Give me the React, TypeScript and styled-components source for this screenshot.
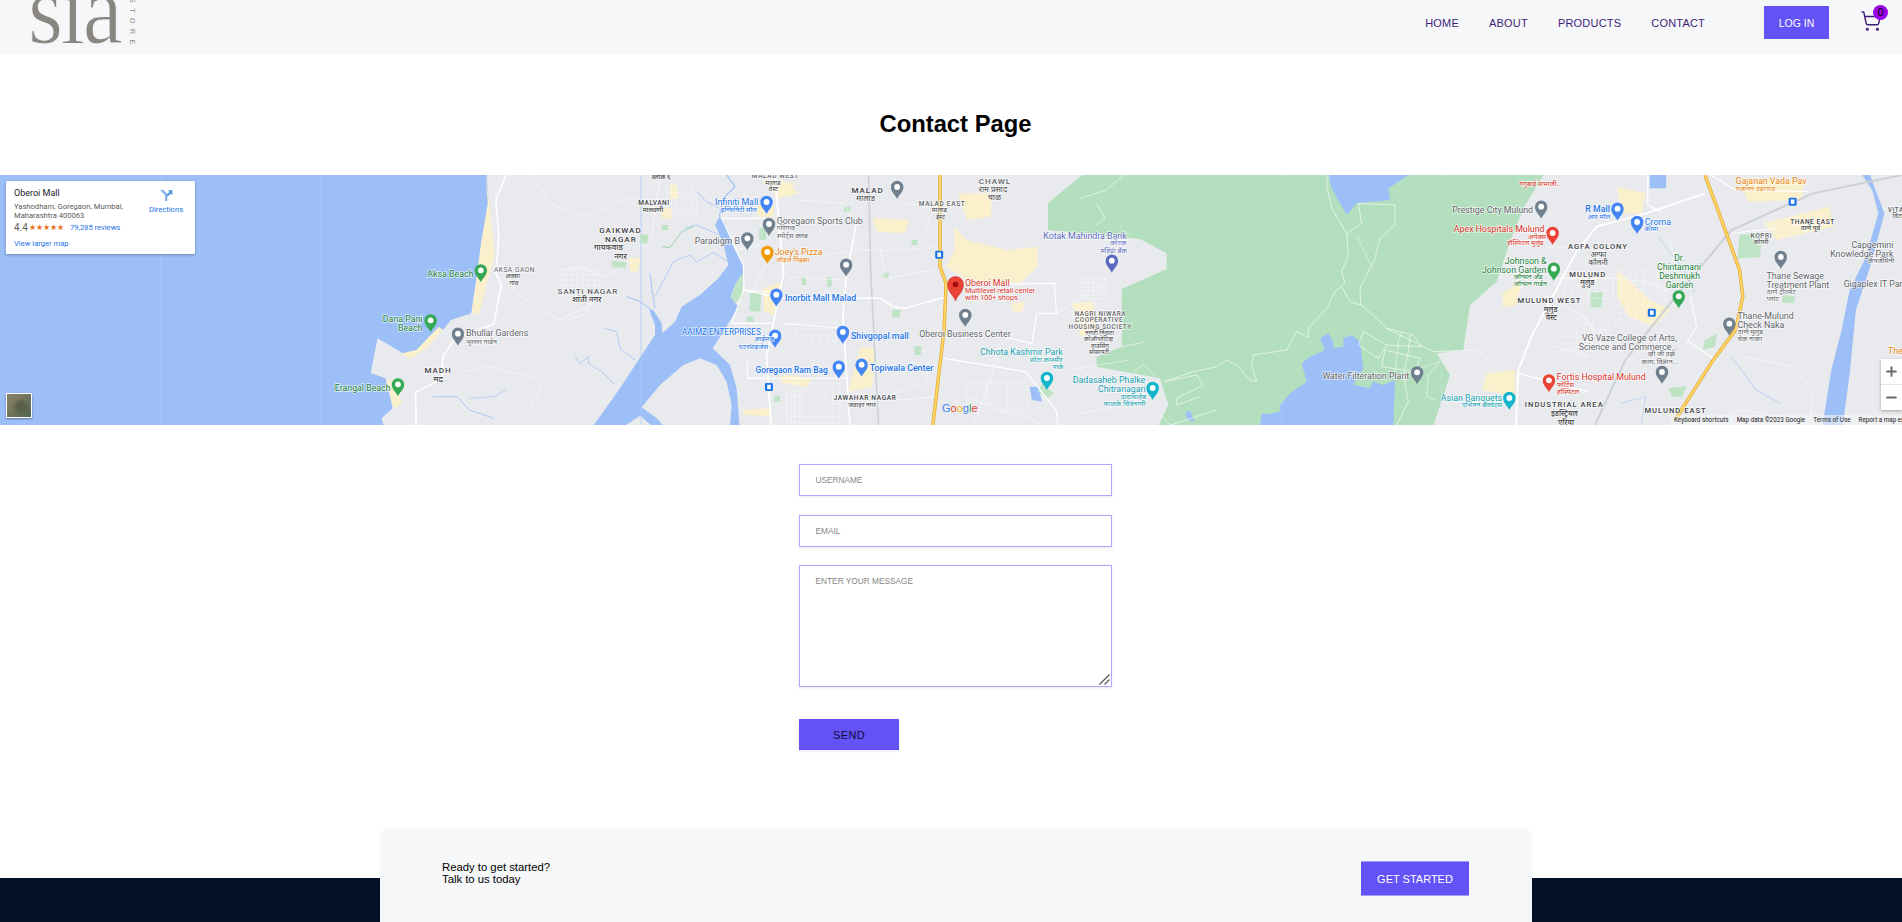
import React from "react";
import styled, { createGlobalStyle } from "styled-components";
import { ShoppingCart, Plus, Minus } from "lucide-react";

const Global = createGlobalStyle`
  html, body { margin: 0; padding: 0; background: #fff; overflow: hidden; }
  body { font-family: "Liberation Sans", Arial, sans-serif; }
  * { box-sizing: border-box; }
`;

const Page = styled.div`
  height: 922px;
  overflow: hidden;
  display: flex;
  flex-direction: column;
`;

/* ---------- nav ---------- */
const Nav = styled.header`
  height: 54px;
  flex: none;
  background: #f6f7f9;
  display: flex;
  align-items: flex-start;
  padding-left: 30px;
`;
const Logo = styled.div`
  width: 106px;
  height: 45px;
  overflow: hidden;
  display: flex;
  color: #8a8681;
`;
const LogoWord = styled.span`
  font-family: "Liberation Serif", serif;
  font-size: 100px;
  line-height: 20px;
  letter-spacing: -3px;
  margin-left: -2px;
  width: 100px;
  flex: none;
  transform: scaleX(0.9);
  transform-origin: left center;
  -webkit-text-stroke: 1.1px #f6f7f9;
`;
const LogoStore = styled.span`
  writing-mode: vertical-rl;
  font-family: "Liberation Sans", sans-serif;
  font-size: 7px;
  letter-spacing: 5.6px;
  line-height: 8px;
  margin-top: -2px;
  white-space: nowrap;
`;
const NavRight = styled.nav`
  margin-left: auto;
  display: flex;
  align-items: center;
  height: 45px;
`;
const NavLink = styled.a`
  font-size: 11px;
  color: #3d1d78;
  margin-right: 30px;
  letter-spacing: 0.2px;
`;
const LoginButton = styled.button`
  width: 65px;
  height: 33px;
  margin-left: 29px;
  border: 0;
  background: #6352f6;
  color: #fff;
  font: 10.5px "Liberation Sans", sans-serif;
  padding: 0;
`;
const CartWrap = styled.div`
  position: relative;
  width: 22px;
  height: 22px;
  margin-left: 31px;
  margin-right: 20px;
  margin-top: -3px;
  color: #3d1d78;
  svg { display: block; }
`;
const CartBadge = styled.span`
  position: absolute;
  top: -5px;
  left: 13px;
  width: 15px;
  height: 15px;
  border-radius: 50%;
  background: #9a06e8;
  color: #000;
  font-size: 11px;
  line-height: 15px;
  text-align: center;
`;

/* ---------- title ---------- */
const TitleBar = styled.div`
  height: 121px;
  flex: none;
  display: flex;
  align-items: center;
  justify-content: center;
  padding: 19px 0 0 9px;
`;
const Title = styled.h1`
  margin: 0;
  font-size: 23.8px;
  font-weight: 700;
  color: #000;
`;

/* ---------- map ---------- */
const MapFrame = styled.section`
  position: relative;
  height: 250px;
  flex: none;
  overflow: hidden;
  background: #e8eaed;
`;
const MapSvg = styled.svg`
  display: block;
  width: 1902px;
  height: 250px;
`;
const MapLabel = styled.text<{ $c: string; $s: number; $w: number; $ls: number }>`
  font-family: Roboto, "Noto Sans Devanagari", "Noto Sans", sans-serif;
  fill: ${(p) => p.$c};
  font-size: ${(p) => p.$s}px;
  font-weight: ${(p) => p.$w};
  letter-spacing: ${(p) => p.$ls}px;
  paint-order: stroke;
  stroke: rgba(255, 255, 255, 0.75);
  stroke-width: 1.4px;
  dominant-baseline: central;
`;
const GoogleMark = styled.text`
  font-family: "Liberation Sans", sans-serif;
  font-size: 11px;
  font-weight: 400;
`;
const InfoCard = styled.div`
  position: absolute;
  left: 6px;
  top: 6px;
  width: 189px;
  height: 73px;
  background: #fff;
  box-shadow: 0 1px 3px rgba(0, 0, 0, 0.3);
  border-radius: 1px;
  padding: 7px 8px;
  display: flex;
  font-family: Roboto, sans-serif;
`;
const InfoMain = styled.div`
  flex: 1;
  display: flex;
  flex-direction: column;
`;
const PlaceName = styled.div`
  font-size: 9px;
  font-weight: 400;
  line-height: 11px;
  color: #202124;
`;
const Address = styled.div`
  margin-top: 3px;
  font-size: 7.6px;
  line-height: 9px;
  color: #5b5b5b;
`;
const RatingRow = styled.div`
  margin-top: 2px;
  display: flex;
  align-items: center;
  height: 12px;
  font-size: 10px;
  color: #5b5b5b;
`;
const Stars = styled.span`
  font-size: 7.6px;
  color: #e7711b;
  margin-left: 1px;
  margin-right: 6px;
`;
const MapLink = styled.a`
  font-size: 7.6px;
  color: #1a73e8;
  line-height: 10px;
`;
const LargerLink = styled(MapLink)`
  margin-top: 6px;
`;
const Directions = styled.div`
  width: 34px;
  margin-right: 4px;
  display: flex;
  flex-direction: column;
  align-items: center;
  gap: 3px;
  padding-top: 1px;
  color: #1a73e8;
  font-size: 7.6px;
`;
const SatelliteThumb = styled.div`
  position: absolute;
  left: 6px;
  top: 218px;
  width: 26px;
  height: 25px;
  border: 1.5px solid #fff;
  box-shadow: 0 1px 2px rgba(0, 0, 0, 0.4);
  background: radial-gradient(circle at 60% 55%, #59604a 0 20%, transparent 45%),
    linear-gradient(135deg, #8b8468, #6d7059 60%, #4c6650);
`;
const ZoomControl = styled.div`
  position: absolute;
  right: 0;
  top: 184px;
  width: 21px;
  height: 51px;
  background: #fff;
  box-shadow: 0 1px 3px rgba(0, 0, 0, 0.3);
  display: flex;
  flex-direction: column;
  color: #666;
`;
const ZoomBtn = styled.div`
  flex: 1;
  display: flex;
  align-items: center;
  justify-content: flex-start;
  padding-left: 3px;
  & + & { border-top: 1px solid #e6e6e6; }
`;
const Attribution = styled.div`
  position: absolute;
  left: 1670px;
  right: 0;
  bottom: 0;
  height: 10px;
  display: flex;
  align-items: center;
  gap: 8px;
  padding-left: 4px;
  background: rgba(245, 245, 245, 0.6);
  font-family: Roboto, sans-serif;
  font-size: 6.3px;
  color: #222;
  white-space: nowrap;
  overflow: hidden;
`;

/* ---------- form ---------- */
const Form = styled.form`
  flex: none;
  width: 313px;
  margin: 39px 0 0 799px;
  display: flex;
  flex-direction: column;
  align-items: flex-start;
`;
const fieldCss = `
  display: block;
  width: 313px;
  border: 1.5px solid #b3a6ff;
  border-radius: 0;
  background: #fff;
  box-shadow: 0 1px 3px rgba(0,0,0,0.1);
  font-family: "Liberation Sans", sans-serif;
  font-size: 8.3px;
  padding-left: 15.5px;
  outline: none;
  &::placeholder { color: #858585; opacity: 1; }
`;
const Field = styled.input`
  ${fieldCss}
  height: 32px;
  margin-bottom: 19px;
  &:nth-of-type(2) { margin-bottom: 18px; }
`;
const MessageWrap = styled.div`
  position: relative;
  width: 313px;
  height: 122px;
`;
const Message = styled.textarea`
  ${fieldCss}
  height: 122px;
  padding-top: 10px;
  margin: 0;
  resize: none;
`;
const ResizeGrip = styled.svg`
  position: absolute;
  right: 2px;
  bottom: 2px;
  width: 11px;
  height: 11px;
  pointer-events: none;
`;
const SendButton = styled.button`
  width: 100px;
  height: 31px;
  margin-top: 32px;
  border: 0;
  background: #6352f6;
  color: #120a3a;
  font: 11px "Liberation Sans", sans-serif;
  letter-spacing: 0.4px;
  box-shadow: 0 1px 3px rgba(0, 0, 0, 0.1);
`;

/* ---------- footer ---------- */
const FooterZone = styled.div`
  position: relative;
  flex: 1;
  margin-top: 128px;
  background: #051129;
`;
const Cta = styled.div`
  position: absolute;
  left: 380px;
  top: -49px;
  width: 1152px;
  height: 200px;
  border-radius: 8px;
  background: #f6f7f9;
  box-shadow: 0 0 2px rgba(0, 0, 0, 0.06);
  display: flex;
  justify-content: space-between;
  align-items: flex-start;
  padding: 32px 63px 32px 62px;
`;
const CtaText = styled.div`
  font-size: 11.3px;
  line-height: 12px;
  color: #000;
`;
const CtaButton = styled.button`
  width: 108px;
  height: 35px;
  border: 0;
  border-top: 1px solid #a79cf3;
  border-bottom: 1px solid #a79cf3;
  background: #6352f6;
  color: #fff;
  font: 11px "Liberation Sans", sans-serif;
  padding: 0;
`;

/* ---------- map data ---------- */
const OX = [0, 640, 1262, 560, 1080];
const OY = [170, 170, 170, 175, 175];
const SX = [1 / 2.45, 1 / 2.45, 1 / 2.45, 1 / 3, 1 / 3];
const SY = 1 / 3;
const px = (p: number, x: number) => OX[p] + x * SX[p];
const py = (y: number, p = 0) => OY[p] + y * SY;

type Poly = { p: number; d: string };
const water: Poly[] = [
  { p: 0, d: "-5,10 1192,10 1198,100 1180,210 1168,320 1155,430 1105,450 1085,480 1048,525 1005,565 985,548 925,505 908,610 945,625 962,715 935,745 945,790 -5,790" },
  { p: 3, d: "100,752 180,640 245,540 285,480 285,450 268,405 280,405 305,445 307,475 345,440 365,395 420,360 475,310 505,270 490,205 465,150 478,125 495,145 520,215 548,270 550,300 525,330 512,365 535,395 490,470 458,520 510,570 530,640 538,752 510,752 515,690 500,620 470,570 420,550 370,570 300,630 245,697 290,730 310,752 275,752 240,722 195,752" },
  { p: 1, d: "1520,790 1530,735 1568,725 1568,790" },
  { p: 1, d: "955,650 975,650 985,695 960,690" },
  { p: 4, d: "755,40 800,120 830,85 930,75 925,40 990,-2 745,-2" },
  { p: 4, d: "720,490 745,475 760,500 760,520 790,515 790,490 815,480 840,500 850,580 830,610 820,630 870,640 880,620 910,630 945,615 940,752 540,752 545,715 600,720 600,690 630,655 680,620 665,565 690,545 735,525" },
  { p: 4, d: "315,715 330,705 342,740 325,735" },
  { p: 2, d: "950,15 990,15 990,55 950,55" },
  { p: 2, d: "1470,15 1495,60 1510,130 1480,260 1440,360 1420,480 1395,600 1370,790 1420,790 1440,610 1455,420 1490,290 1525,130 1500,50 1490,15" },
];
const forest: Poly[] = [
  { p: 4, d: "9,-2 1392,-2 1330,100 1290,200 1250,320 1170,390 1150,525 1070,535 1110,600 1060,752 235,752 265,690 240,610 50,575 50,545 125,515 125,342 260,282 260,235 180,192 -96,165 -96,84" },
];
const parks: Poly[] = [
  { p: 3, d: "240,180 265,178 262,205 242,205" },
  { p: 3, d: "155,258 200,262 198,280 157,276" },
  { p: 3, d: "305,150 325,150 325,165 305,165" },
  { p: 3, d: "570,355 605,350 600,410 568,408" },
  { p: 3, d: "530,320 548,295 548,365 525,385 512,365" },
  { p: 3, d: "598,160 620,155 618,195 598,195" },
  { p: 3, d: "560,425 580,425 582,440 560,440" },
  { p: 3, d: "642,662 660,662 660,680 642,680" },
  { p: 1, d: "395,320 405,320 408,345 397,345" },
  { p: 1, d: "458,322 470,322 470,350 458,350" },
  { p: 1, d: "595,308 610,308 608,325 595,325" },
  { p: 1, d: "618,420 640,420 635,442 618,442" },
  { p: 1, d: "672,528 690,528 688,555 672,555" },
  { p: 1, d: "665,210 680,210 680,225 665,225" },
  { p: 1, d: "500,110 515,110 515,125 500,125" },
  { p: 1, d: "985,640 1015,670 1000,685 975,665" },
  { p: 2, d: "1170,195 1225,190 1220,262 1165,265" },
  { p: 2, d: "805,368 835,365 832,412 805,412" },
  { p: 2, d: "1085,510 1115,490 1110,530 1080,540" },
  { p: 2, d: "995,655 1040,648 1030,680 1005,680" },
  { p: 2, d: "1275,375 1305,378 1305,400 1275,398" },
];
const beach: Poly[] = [
  { p: 0, d: "1190,15 1200,110 1212,260 1195,330 1175,430 1155,430 1168,320 1180,210 1195,100" },
  { p: 0, d: "1075,470 1085,480 1048,530 1005,568 985,550 1020,540" },
  { p: 0, d: "945,625 965,640 985,700 965,718" },
  { p: 3, d: "330,30 350,30 355,70 330,70" },
  { p: 3, d: "300,100 335,100 335,130 305,130" },
  { p: 3, d: "205,250 240,250 235,290 212,290" },
  { p: 3, d: "610,340 665,320 660,380 640,420 612,410" },
  { p: 3, d: "640,30 700,20 700,60 650,70" },
  { p: 3, d: "590,90 640,90 640,125 595,125" },
  { p: 3, d: "545,705 625,700 635,725 555,720" },
  { p: 3, d: "660,600 720,605 720,625 670,620" },
  { p: 1, d: "770,170 800,210 900,240 975,230 975,290 930,340 800,330 750,290 770,240" },
  { p: 1, d: "780,70 860,70 860,140 800,150" },
  { p: 1, d: "570,145 660,150 650,190 580,185" },
  { p: 1, d: "300,30 350,30 390,70 340,85" },
  { p: 1, d: "540,530 575,535 570,650 510,665" },
  { p: 1, d: "1060,400 1110,395 1120,480 1080,500" },
  { p: 1, d: "340,620 420,625 410,650 350,640" },
  { p: 1, d: "910,400 945,395 935,425 915,425" },
  { p: 2, d: "870,300 950,390 1000,420 960,470 900,440 870,380" },
  { p: 2, d: "1230,160 1390,110 1400,170 1260,210" },
  { p: 2, d: "1170,25 1330,30 1320,90 1190,95" },
  { p: 2, d: "590,370 640,330 620,410 590,410" },
  { p: 2, d: "550,610 620,600 620,680 540,660" },
  { p: 2, d: "870,50 940,70 930,130 880,130" },
];
type Road = { p: number; d: string; w?: number; c?: string };
const BL = "#9cbff8";
const roads: Road[] = [
  { p: 0, d: "1240,15 1215,90 1222,200 1215,310 1228,345 1210,462 1115,505 1085,560 1083,625 1018,668 1020,780", w: 1.6 },
  { p: 0, d: "1255,360 1300,400 1370,450 1440,410 1470,380", w: 0.5 },
  { p: 0, d: "1380,300 1420,290 1480,320 1560,270", w: 0.5 },
  { p: 0, d: "1140,605 1200,590 1330,630 1300,720", w: 0.5 },
  { p: 0, d: "1300,15 1350,100 1420,140 1560,80", w: 0.5 },
  { p: 0, d: "1060,680 1120,680 1150,720 1210,745", w: 0.8, c: BL },
  { p: 0, d: "1240,660 1210,680 1150,685", w: 0.6, c: BL },
  { p: 3, d: "200,365 240,380 275,405", w: 0.9, c: BL },
  { p: 3, d: "270,295 275,340 285,400", w: 0.9, c: BL },
  { p: 3, d: "285,365 340,260 390,240 410,262 460,232 500,258", w: 0.7, c: BL },
  { p: 3, d: "135,460 170,470 180,520 225,555", w: 0.7, c: BL },
  { p: 3, d: "45,545 60,565 85,545 85,565 125,590 165,630", w: 0.7, c: BL },
  { p: 3, d: "375,160 410,150 480,180", w: 0.7, c: BL },
  { p: 3, d: "410,50 440,80 480,100", w: 0.7, c: BL },
  { p: 3, d: "500,0 525,35 490,70 478,125", w: 1.2, c: BL },
  { p: 3, d: "305,215 330,218 365,170 400,155", w: 0.7, c: "#7fc99a" },
  { p: 3, d: "485,130 640,130", w: 1.3 },
  { p: 3, d: "485,130 550,270 552,340 515,445 640,445", w: 1.1 },
  { p: 3, d: "562,560 562,610 630,610", w: 1 },
  { p: 3, d: "552,345 640,352", w: 0.9 },
  { p: 3, d: "620,265 575,345", w: 0.6 },
  { p: 3, d: "530,225 600,210", w: 0.7 },
  { p: 3, d: "300,10 275,180", w: 0.6 },
  { p: 3, d: "15,440 70,420 120,330", w: 0.5 },
  { p: 1, d: "330,15 352,310 310,560 322,780", w: 1.8 },
  { p: 1, d: "530,160 505,320 497,440 515,780", w: 1.6 },
  { p: 1, d: "255,360 350,385 590,385 620,410 650,415 750,380", w: 1.5 },
  { p: 1, d: "350,460 500,475", w: 1 },
  { p: 1, d: "750,345 1015,340 1020,430 972,430 960,520 850,490", w: 1.2 },
  { p: 1, d: "745,565 945,605 1020,722 1025,780", w: 1.2 },
  { p: 1, d: "265,625 510,625", w: 1 },
  { p: 1, d: "1020,430 1060,400 1140,340 1145,250", w: 0.5 },
  { p: 1, d: "590,240 600,325 720,300", w: 0.6 },
  { p: 1, d: "440,260 520,240 660,240 720,230", w: 0.5 },
  { p: 1, d: "360,320 500,330", w: 0.5 },
  { p: 1, d: "600,680 700,640 710,560", w: 0.5 },
  { p: 1, d: "520,670 640,690 720,680", w: 0.6 },
  { p: 1, d: "800,680 920,740", w: 0.5 },
  { p: 1, d: "880,530 860,620 820,760", w: 0.5 },
  { p: 1, d: "640,100 720,110 700,180", w: 0.5 },
  { p: 1, d: "380,90 500,100 520,150", w: 0.5 },
  { p: 1, d: "900,720 980,760", w: 0.5 },
  { p: 1, d: "1050,600 1100,590 1200,570", w: 0.5 },
  { p: 4, d: "745,0 740,30 755,100 800,175 805,240 785,290 795,325 765,350 740,400 685,460 685,488 650,470 620,525 520,540 515,570 530,620 510,615 470,570 440,555 410,575 340,590 255,620", w: 0.6 },
  { p: 4, d: "800,175 845,145 835,85 945,90 945,150 900,190 885,250 840,340 842,390 810,380 785,335", w: 0.6 },
  { p: 4, d: "842,390 880,420 920,460 1060,530 1190,525 1250,570", w: 0.6 },
  { p: 4, d: "850,470 920,510 895,550 835,510 850,470", w: 0.6 },
  { p: 4, d: "920,510 1025,515 1000,480 920,460", w: 0.6 },
  { p: 4, d: "915,525 1020,550 1005,590 905,575 915,525", w: 0.6 },
  { p: 4, d: "965,470 955,500 945,590", w: 0.5 },
  { p: 4, d: "990,480 985,530 970,600 985,680 950,750", w: 0.6 },
  { p: 4, d: "1020,580 1080,560 1045,600 1040,665 1065,675", w: 0.5 },
  { p: 4, d: "255,620 350,600 370,630 290,670 290,690 360,665", w: 0.6 },
  { p: 4, d: "230,710 270,750 410,705", w: 0.6 },
  { p: 4, d: "130,0 80,45 0,70", w: 0.6 },
  { p: 4, d: "50,85 75,130 50,150", w: 0.6 },
  { p: 4, d: "125,515 190,502", w: 0.6 },
  { p: 4, d: "0,715 80,700 235,660", w: 0.6 },
  { p: 4, d: "160,590 190,570 225,600", w: 0.5 },
  { p: 4, d: "830,180 880,285", w: 0.4 },
  { p: 2, d: "622,780 628,600 660,500 770,245 820,170 940,130 1085,70", w: 1.8 },
  { p: 2, d: "945,15 945,105 975,125", w: 1.3 },
  { p: 2, d: "628,610 720,640 800,665", w: 1.4 },
  { p: 2, d: "1040,510 1110,570", w: 1.3 },
  { p: 2, d: "1050,380 1065,470 1040,520", w: 1 },
  { p: 2, d: "720,325 870,325 960,340 1000,370", w: 0.6 },
  { p: 2, d: "800,460 900,570 985,500", w: 0.5 },
  { p: 2, d: "1100,15 1160,60 1340,65", w: 1.2 },
  { p: 2, d: "1150,190 1260,175", w: 1 },
  { p: 2, d: "1000,200 1010,280", w: 0.5 },
  { p: 2, d: "700,230 830,235", w: 0.5 },
  { p: 2, d: "700,380 790,440 840,540", w: 0.5 },
  { p: 2, d: "650,500 720,530 800,560", w: 0.5 },
  { p: 2, d: "1180,560 1300,590 1350,660 1340,780", w: 0.5 },
  { p: 2, d: "1120,740 1180,720 1270,740", w: 0.5 },
  { p: 2, d: "970,200 1040,310 1060,370", w: 0.5, c: BL },
  { p: 2, d: "1150,560 1210,660 1270,700", w: 0.6, c: BL },
  { p: 2, d: "880,700 940,680 930,760", w: 0.5, c: BL },
];
// thin street grids: [panel, x, y, w, h, columns, rows]
const grids: [number, number, number, number, number, number, number][] = [
  [3, 320, 20, 90, 100, 6, 6],
  [3, 0, 285, 120, 60, 7, 4],
  [3, 680, 650, 40, 90, 3, 6],
  [4, 0, 312, 80, 62, 6, 5],
  [1, 1060, 400, 70, 60, 5, 4],
  [1, 380, 440, 100, 90, 5, 5],
  [1, 360, 640, 130, 120, 7, 6],
  [1, 800, 640, 150, 80, 6, 4],
  [2, 860, 300, 130, 150, 7, 7],
  [2, 730, 440, 120, 120, 6, 6],
  [2, 1230, 130, 150, 70, 7, 4],
  [2, 720, 325, 140, 60, 7, 3],
];
const rails: Road[] = [
  { p: 1, d: "560,15 565,300 585,780", w: 1.6, c: "#cdd0d5" },
  { p: 2, d: "810,780 890,570 1000,400 1150,180 1350,70 1568,15", w: 2, c: "#cdd0d5" },
];
const highways: Road[] = [
  { p: 1, d: "735,15 735,290 750,340 745,480 716,780" },
  { p: 2, d: "1085,15 1120,130 1170,300 1178,380 1160,480 1100,580 1030,715 1015,745" },
];

const M = "#5f6368";
const B = "#1a73e8";
const R = "#d93025";
const G = "#188038";
const T = "#129eaf";
const O = "#e8830c";
const D = "#3c4043";
const K = "#5c6bc0";
const S = 8.8;
type Lab = [number, number, number, string, string?, number?, number?, number?];
const labels: Lab[] = [
  [0, 1047, 313, "Aksa Beach", G, 8.8],
  [0, 1210, 300, "AKSA GAON", M, 6.5, 400, 0.6],
  [0, 1238, 318, "अक्सा", D, 6.5],
  [0, 1248, 338, "गांव", D, 6.5],
  [0, 938, 447, "Dana Pani", G, 8.8],
  [0, 975, 474, "Beach", G, 8.8],
  [0, 1142, 490, "Bhullar Gardens", M, 8.8],
  [0, 1142, 515, "भुल्लर गार्डन", M, 7],
  [0, 1040, 600, "MADH", D, 8, 500, 1],
  [0, 1062, 627, "मढ", D, 8, 500],
  [0, 820, 654, "Erangal Beach", G, 8.8],
  [0, 1366, 363, "SANTI NAGAR", M, 8, 500, 0.8],
  [0, 1402, 388, "शांती नगर", D, 8, 500],
  [0, 1468, 180, "GAIKWAD", D, 8, 500, 1],
  [0, 1482, 207, "NAGAR", D, 8, 500, 1],
  [0, 1455, 232, "गायकवाड", D, 8, 500],
  [0, 1505, 258, "नगर", D, 8, 500],
  [3, 235, 85, "MALVANI", D, 6.5, 500, 0.5],
  [3, 248, 104, "मालवणी", D, 6.5, 500],
  [3, 275, 5, "ब्लॉक ६", D, 6.5, 500],
  [1, 184, 97, "Infiniti Mall", B, S],
  [1, 198, 120, "इन्फिनिटी मॉल", B, 7],
  [1, 335, 154, "Goregaon Sports Club", M, S],
  [1, 335, 175, "गोरेगाव", M, 7],
  [1, 335, 197, "स्पोर्ट्स क्लब", M, 7],
  [1, 134, 214, "Paradigm B", M, S],
  [1, 330, 247, "Joey's Pizza", O, S],
  [1, 333, 270, "जॉइज पिझ्झा", O, 7],
  [1, 355, 383, "Inorbit Mall Malad", B, S, 500],
  [1, 103, 486, "AAIMZ ENTERPRISES", B, 8.2],
  [1, 280, 507, "आईमज", B, 7],
  [1, 242, 530, "एंटरप्राइजेस", B, 7],
  [1, 517, 497, "Shivgopal mall", B, S, 500],
  [1, 283, 600, "Goregaon Ram Bag", B, 8.4, 500],
  [1, 563, 595, "Topiwala Center", B, S, 500],
  [1, 474, 685, "JAWAHAR NAGAR", D, 6.5, 500, 0.7],
  [1, 510, 705, "जवाहर नगर", D, 6.5],
  [1, 274, 19, "MALAD WEST", M, 6.5, 500, 0.6],
  [1, 307, 38, "मालाड", D, 6.5],
  [1, 315, 57, "वेस्ट", D, 6.5],
  [1, 518, 60, "MALAD", D, 8, 500, 1],
  [1, 530, 85, "मालाड", D, 8],
  [1, 683, 101, "MALAD EAST", M, 6.5, 500, 0.7],
  [1, 715, 120, "मालाड", D, 6.5],
  [1, 725, 140, "ईस्ट", D, 6.5],
  [1, 830, 33, "CHAWL", M, 8, 500, 1],
  [1, 830, 57, "राम प्रसाद", D, 8],
  [1, 852, 83, "चाळ", D, 8],
  [1, 988, 197, "Kotak Mahindra Bank", K, S],
  [1, 1152, 220, "कोटक", K, 7],
  [1, 1128, 242, "महिंद्रा बँक", K, 7],
  [1, 796, 338, "Oberoi Mall", R, S],
  [1, 796, 361, "Multilevel retail center", R, 7.2],
  [1, 796, 382, "with 100+ shops", R, 7.2],
  [1, 684, 491, "Oberoi Business Center", M, S],
  [1, 833, 547, "Chhota Kashmir Park", T, S],
  [1, 955, 570, "छोटा काश्मीर", T, 7],
  [1, 1010, 592, "पार्क", T, 7],
  [1, 1060, 631, "Dadasaheb Phalke", T, S],
  [1, 1122, 657, "Chitranagari", T, S],
  [1, 1178, 682, "दादासाहेब", T, 7],
  [1, 1135, 702, "फाळके चित्रनगरी", T, 7],
  [1, 1065, 432, "NAGRI NIWARA", M, 6.3, 500, 0.6],
  [1, 1066, 451, "COOPERATIVE", M, 6.3, 500, 0.6],
  [1, 1050, 470, "HOUSING SOCIETY", M, 6.3, 500, 0.6],
  [1, 1090, 490, "नागरी निवारा", D, 6.3],
  [1, 1088, 508, "कोऑपरेटिव्ह", D, 6.3],
  [1, 1105, 527, "हाउसिंग", D, 6.3],
  [1, 1100, 546, "सोसायटी", D, 6.3],
  [2, 630, 42, "गंगुबाई सभाजी...", R, 7],
  [2, 466, 120, "Prestige City Mulund", M, S],
  [2, 792, 117, "R Mall", B, S, 500],
  [2, 798, 140, "आर मॉल", B, 7],
  [2, 938, 155, "Croma", B, S],
  [2, 938, 178, "क्रोमा", B, 7],
  [2, 470, 178, "Apex Hospitals Mulund", R, S],
  [2, 652, 200, "अपेक्स", R, 7],
  [2, 600, 220, "हॉस्पिटल मुलुंड", R, 7],
  [2, 595, 273, "Johnson &", G, S],
  [2, 539, 300, "Johnson Garden", G, S],
  [2, 617, 322, "जॉन्सन अँड", G, 7],
  [2, 617, 343, "जॉन्सन गार्डन", G, 7],
  [2, 750, 228, "AGFA COLONY", D, 7.6, 500, 0.9],
  [2, 805, 253, "अग्फा", D, 7.6],
  [2, 800, 277, "कॉलनी", D, 7.6],
  [2, 753, 312, "MULUND", D, 7.6, 500, 1],
  [2, 780, 338, "मुलुंड", D, 7.6, 500],
  [2, 626, 390, "MULUND WEST", D, 7.6, 500, 1],
  [2, 690, 417, "मुलुंड", D, 7.6, 500],
  [2, 695, 442, "वेस्ट", D, 7.6, 500],
  [2, 1010, 265, "Dr.", G, 8.6],
  [2, 968, 291, "Chintamani", G, 8.6],
  [2, 973, 318, "Deshmukh", G, 8.6],
  [2, 989, 344, "Garden", G, 8.6],
  [2, 1160, 33, "Gajanan Vada Pav", O, S],
  [2, 1160, 57, "गजानन वडापाव", O, 7],
  [2, 1294, 155, "THANE EAST", D, 6.5, 500, 0.6],
  [2, 1320, 175, "ठाणे पूर्व", D, 6.5, 500],
  [2, 1197, 197, "KOPRI", M, 6.5, 500, 0.6],
  [2, 1205, 215, "कोपरी", D, 6.5],
  [2, 1236, 318, "Thane Sewage", M, S],
  [2, 1236, 344, "Treatment Plant", M, S],
  [2, 1236, 367, "ठाणे ट्रीटमेंट", M, 7],
  [2, 1236, 388, "प्लांट", M, 7],
  [2, 1444, 225, "Capgemini", M, S],
  [2, 1392, 251, "Knowledge Park", M, S],
  [2, 1485, 272, "कॅपजेमिनी", M, 7],
  [2, 1425, 343, "Gigaplex IT Park", M, S],
  [2, 1533, 120, "VITA", M, 6.5, 500, 0.6],
  [2, 1545, 138, "विटा", D, 6.5],
  [2, 1165, 438, "Thane-Mulund", M, S],
  [2, 1165, 464, "Check Naka", M, S],
  [2, 1165, 487, "ठाणे-मुलुंड", M, 7],
  [2, 1165, 507, "चेक नाका", M, 7],
  [2, 784, 503, "VG Vaze College of Arts,", M, S],
  [2, 776, 530, "Science and Commerce...", M, S],
  [2, 945, 553, "व्ही जी वझे", M, 7],
  [2, 930, 575, "कला, विज्ञान...", M, 7],
  [2, 1534, 542, "The", O, S],
  [2, 148, 618, "Water Filteration Plant", M, S],
  [2, 722, 622, "Fortis Hospital Mulund", R, S],
  [2, 722, 645, "फोर्टिस", R, 7],
  [2, 722, 665, "हॉस्पिटल", R, 7],
  [2, 438, 684, "Asian Banquets", T, S],
  [2, 490, 705, "एशियन बँक्वेट्स", T, 7],
  [2, 644, 704, "INDUSTRIAL AREA", D, 7.6, 500, 1],
  [2, 708, 730, "इंडस्ट्रियल", D, 7.6, 500],
  [2, 725, 757, "एरिया", D, 7.6, 500],
  [2, 937, 722, "MULUND EAST", D, 7.6, 500, 1],
];

const GRAY = "#70808f";
type PinT = [number, number, number, string];
const pins: PinT[] = [
  [0, 1178, 337, "#34a853"],
  [0, 1055, 487, "#34a853"],
  [0, 975, 679, "#34a853"],
  [0, 1122, 527, GRAY],
  [1, 630, 87, GRAY],
  [1, 310, 132, "#4285f4"],
  [1, 316, 198, GRAY],
  [1, 263, 241, GRAY],
  [1, 312, 282, "#f29900"],
  [1, 505, 320, GRAY],
  [1, 334, 410, "#4285f4"],
  [1, 331, 533, "#4285f4"],
  [1, 497, 522, "#4285f4"],
  [1, 487, 626, "#4285f4"],
  [1, 543, 620, "#4285f4"],
  [1, 797, 471, GRAY],
  [1, 1156, 308, K],
  [1, 997, 660, "#12b5cb"],
  [1, 1256, 690, "#12b5cb"],
  [2, 684, 146, GRAY],
  [2, 871, 152, "#4285f4"],
  [2, 919, 192, "#4285f4"],
  [2, 712, 225, "#ea4335"],
  [2, 715, 332, "#34a853"],
  [2, 1021, 415, "#34a853"],
  [2, 1271, 297, GRAY],
  [2, 1145, 497, GRAY],
  [2, 980, 642, GRAY],
  [2, 380, 643, GRAY],
  [2, 703, 667, "#ea4335"],
  [2, 606, 720, "#12b5cb"],
];
const metro: [number, number, number][] = [
  [1, 733, 254],
  [1, 316, 651],
  [2, 1300, 95],
  [2, 955, 428],
];

const Pin = ({ x, y, c }: { x: number; y: number; c: string }) => (
  <g transform={`translate(${x} ${y})`}>
    <path d="M0 0C-1.2-3.6-6.2-6.5-6.2-12A6.2 6.2 0 0 1 6.2-12C6.2-6.5 1.2-3.6 0 0Z" fill={c} />
    <circle cx="0" cy="-12" r="2.9" fill="#fff" />
  </g>
);

const PolyLayer = ({ list, fill }: { list: Poly[]; fill: string }) => (
  <>
    {list.map((a, i) => (
      <polygon key={i} points={a.d} fill={fill} transform={`translate(${OX[a.p]} ${OY[a.p]}) scale(${SX[a.p]} ${SY})`} />
    ))}
  </>
);
const pts = (r: Road) =>
  r.d
    .split(" ")
    .map((s) => {
      const [x, y] = s.split(",").map(Number);
      return `${px(r.p, x)},${py(y, r.p)}`;
    })
    .join(" ");

const gridPath = ([p, x, y, w, h, nx, ny]: (typeof grids)[number]) => {
  let d = "";
  for (let i = 0; i <= nx; i++) {
    const gx = px(p, x + (w * i) / nx);
    d += `M${gx} ${py(y, p)}L${gx} ${py(y + h, p)}`;
  }
  for (let j = 0; j <= ny; j++) {
    const gy = py(y + (h * j) / ny, p);
    d += `M${px(p, x)} ${gy}L${px(p, x + w)} ${gy}`;
  }
  return d;
};

const MapArt = () => (
  <MapSvg viewBox="0 175 1902 250" preserveAspectRatio="none">
    <rect x="0" y="175" width="1902" height="250" fill="#e8eaed" />
    <PolyLayer list={forest} fill="#b3dfbe" />
    <PolyLayer list={water} fill="#9cbff8" />
    {[161, 321, 641].map((x) => (
      <line key={x} x1={x} y1="175" x2={x} y2="425" stroke="#aecbfa" strokeWidth="0.8" />
    ))}
    {[1121.5, 1281.5, 1441.5].map((x) => (
      <line key={x} x1={x} y1="175" x2={x} y2="425" stroke="#fff" strokeOpacity="0.12" strokeWidth="0.8" />
    ))}
    <PolyLayer list={beach} fill="#fbf0cc" />
    <PolyLayer list={parks} fill="#bfe3c5" />
    {grids.map((g, i) => (
      <path key={i} d={gridPath(g)} fill="none" stroke="#fff" strokeOpacity="0.7" strokeWidth="0.4" />
    ))}
    {rails.map((r, i) => (
      <polyline key={i} points={pts(r)} fill="none" stroke={r.c} strokeWidth={r.w} />
    ))}
    {roads.map((r, i) => (
      <polyline key={i} points={pts(r)} fill="none" stroke={r.c || "#fff"} strokeWidth={r.w} strokeLinejoin="round" />
    ))}
    {highways.map((r, i) => (
      <g key={i}>
        <polyline points={pts(r)} fill="none" stroke="#e6a52f" strokeWidth="3.4" strokeLinejoin="round" />
        <polyline points={pts(r)} fill="none" stroke="#fdd663" strokeWidth="2" strokeLinejoin="round" />
      </g>
    ))}
    {pins.map(([p, x, y, c], i) => (
      <Pin key={i} x={px(p, x)} y={py(y, p)} c={c} />
    ))}
    {metro.map(([p, x, y], i) => (
      <g key={i}>
        <rect x={px(p, x) - 4} y={py(y, p) - 4} width="8" height="8" rx="1.4" fill="#1a73e8" />
        <rect x={px(p, x) - 1.8} y={py(y, p) - 2.2} width="3.6" height="4.4" fill="#fff" />
      </g>
    ))}
    <g transform={`translate(${px(1, 773)} ${py(393)})`}>
      <path d="M0 0C-1.5-5-8-9-8-16.5A8 8 0 0 1 8-16.5C8-9 1.5-5 0 0Z" fill="#ea4335" stroke="#c5221f" strokeWidth="0.4" />
      <circle cx="0" cy="-16.5" r="2.8" fill="#a50e0e" />
    </g>
    {labels.map(([p, x, y, t, c, s, w, ls], i) => (
      <MapLabel key={i} x={px(p, x)} y={py(y, p)} $c={c || M} $s={s || 9} $w={w || 400} $ls={ls || 0}>
        {t}
      </MapLabel>
    ))}
    <GoogleMark x="942" y="412">
      <tspan fill="#4285f4">G</tspan>
      <tspan fill="#ea4335">o</tspan>
      <tspan fill="#fbbc04">o</tspan>
      <tspan fill="#4285f4">g</tspan>
      <tspan fill="#34a853">l</tspan>
      <tspan fill="#ea4335">e</tspan>
    </GoogleMark>
  </MapSvg>
);

const DirectionsIcon = () => (
  <svg width="14" height="13" viewBox="0 0 14 13">
    <path d="M1 1l5 5v6h2.4V5.2L4.4 1z" fill="#84b4ec" />
    <path d="M7.6 5.5L10.5 3 9 1.2h4.4V6l-1.5-1.6L8.6 7.5z" fill="#4a90e2" />
  </svg>
);

export default function App() {
  return (
    <Page>
      <Global />
      <Nav>
        <Logo>
          <LogoWord>sia</LogoWord>
          <LogoStore>STORE</LogoStore>
        </Logo>
        <NavRight>
          <NavLink>HOME</NavLink>
          <NavLink>ABOUT</NavLink>
          <NavLink>PRODUCTS</NavLink>
          <NavLink>CONTACT</NavLink>
          <LoginButton>LOG IN</LoginButton>
          <CartWrap>
            <ShoppingCart size={22} strokeWidth={1.5} />
            <CartBadge>0</CartBadge>
          </CartWrap>
        </NavRight>
      </Nav>
      <TitleBar>
        <Title>Contact Page</Title>
      </TitleBar>
      <MapFrame>
        <MapArt />
        <InfoCard>
          <InfoMain>
            <PlaceName>Oberoi Mall</PlaceName>
            <Address>
              Yashodham, Goregaon, Mumbai,
              <br />
              Maharashtra 400063
            </Address>
            <RatingRow>
              4.4
              <Stars>★★★★★</Stars>
              <MapLink>79,285 reviews</MapLink>
            </RatingRow>
            <LargerLink>View larger map</LargerLink>
          </InfoMain>
          <Directions>
            <DirectionsIcon />
            Directions
          </Directions>
        </InfoCard>
        <SatelliteThumb />
        <ZoomControl>
          <ZoomBtn>
            <Plus size={15} strokeWidth={3} />
          </ZoomBtn>
          <ZoomBtn>
            <Minus size={15} strokeWidth={3} />
          </ZoomBtn>
        </ZoomControl>
        <Attribution>
          <span>Keyboard shortcuts</span>
          <span>Map data ©2023 Google</span>
          <span>Terms of Use</span>
          <span>Report a map error</span>
        </Attribution>
      </MapFrame>
      <Form>
        <Field placeholder="USERNAME" />
        <Field placeholder="EMAIL" />
        <MessageWrap>
          <Message placeholder="ENTER YOUR MESSAGE" />
          <ResizeGrip viewBox="0 0 11 11">
            <path d="M0.5 10.5L10.5 0.5M5.5 10.5L10.5 5.5" stroke="#555" strokeWidth="1.2" fill="none" />
          </ResizeGrip>
        </MessageWrap>
        <SendButton type="button">SEND</SendButton>
      </Form>
      <FooterZone>
        <Cta>
          <CtaText>
            Ready to get started?
            <br />
            Talk to us today
          </CtaText>
          <CtaButton>GET STARTED</CtaButton>
        </Cta>
      </FooterZone>
    </Page>
  );
}
